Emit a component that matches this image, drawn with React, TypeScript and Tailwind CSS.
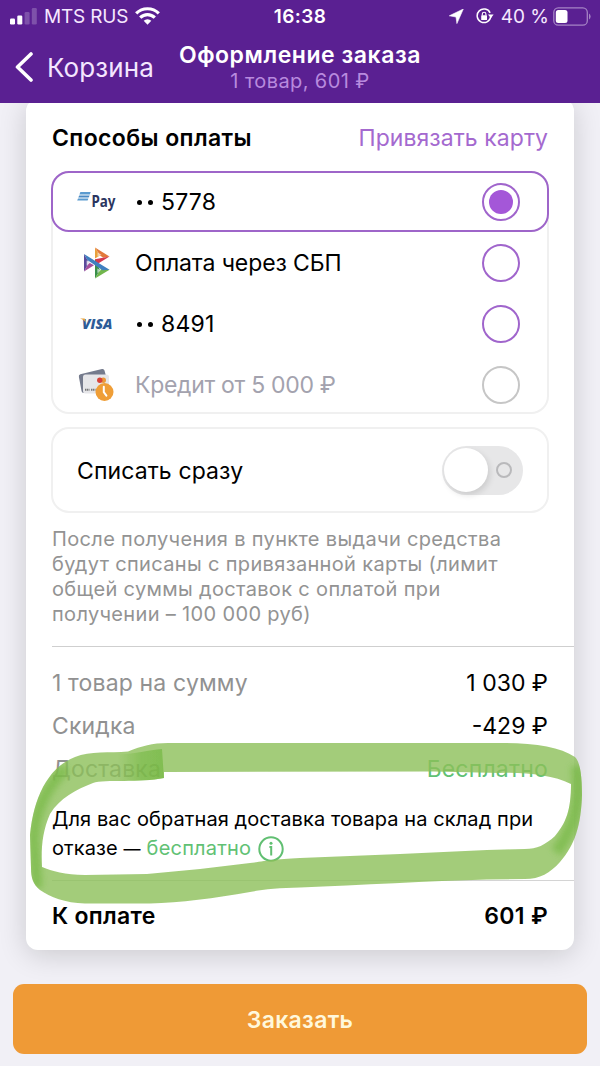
import type {JSX, ReactNode} from 'react';
import clsx from "clsx";

type PaymentOption = {
    id: string
    label: ReactNode
    icon: JSX.Element
    disabled?: boolean
}

type RadioProps = {
    checked: boolean
    disabled?: boolean
}

function MirPayIcon(): JSX.Element {
    return (
        <svg className="overflow-visible" width="40" height="24" viewBox="0 0 40 24">
            <g fill="#5b9bd0">
                <path d="M4.400 2h10.400l-1 2.400H3.400z"/>
                <path d="M3.200 5.400h10.400l-1 2.200H2.300z" fill="#4a8ac4"/>
                <path d="M2 8.600h10.400l-.8 1.800H1.200z"/>
            </g>
            <text x="15.500" y="17.300" fontFamily="Noto Sans, sans-serif" fontWeight="700" fontSize="15.500"
                  textLength="24" lengthAdjust="spacingAndGlyphs" fill="#2b3560">Pay</text>
        </svg>
    );
}

function SbpIcon(): JSX.Element {
    return (
        <svg width="27" height="32" viewBox="0 0 27 32">
            <path d="M1 7v17.5l5-8.7z" fill="#5b4a9b"/>
            <path d="M1 24.5l10-6.3-5-2.7z" fill="#a54f9c"/>
            <path d="M12 .5v11l5-3z" fill="#e9a13b"/>
            <path d="M12 .5l14.5 9-6.3 1.3-3.2-2.4z" fill="#e2793b"/>
            <path d="M26.5 9.5L12 18.5v-6.2z" fill="#d43a50"/>
            <path d="M12 31.5V12.5l5 10.5z" fill="#3a8f4a"/>
            <path d="M12 31.5l14.5-8.7-6-2.4-3.7 2.8z" fill="#72b64c"/>
            <path d="M1 7l25.5 15.8-7 .4L4.3 13z" fill="#3f7fc0"/>
            <path d="M3.7 13.5v5.300l3.300-3z" fill="#fff" opacity=".8"/>
            <path d="M14.5 5.3v4.5l4-2z" fill="#fff" opacity=".5"/>
            <path d="M14.3 21.500v4.500l3.600-2.800z" fill="#fff" opacity=".6"/>
        </svg>
    );
}

function VisaIcon(): JSX.Element {
    return (
        <svg className="overflow-visible" width="34" height="20" viewBox="0 0 34 20">
            <text x="3" y="15" fontFamily="Open Sans, sans-serif" fontWeight="800" fontStyle="italic" fontSize="14.5"
                  textLength="30.5" lengthAdjust="spacingAndGlyphs" fill="#2d5c98">VISA</text>
            <path d="M1 4.400h3.800c.9 0 1.300.5 1.500 1.300l.5 2.900C5.600 6.400 3.800 5.100 1 4.400z" fill="#e8a33d"/>
        </svg>
    );
}

function CreditIcon(): JSX.Element {
    return (
        <svg width="37" height="34" viewBox="0 0 37 34">
            <path d="M2.300 6.200L24 1.100q2-.4 2.500 1.500L28 8v13L5.500 25q-1.500 0-1.900-1.700L.9 9q-.5-2.300 1.400-2.800z"
                  fill="#757b8d"/>
            <rect x="5" y="6.500" width="26" height="19" rx="2.500" fill="#e6e6e9"/>
            <circle cx="25.300" cy="12.300" r="2.700" fill="#eb9a3a"/>
            <circle cx="21.800" cy="12.300" r="2.700" fill="#d6423a"/>
            <path d="M7 21.800h4.500M13 21.800h4.500" stroke="#777" strokeWidth="2" strokeDasharray="1.300 .5"/>
            <circle cx="26.500" cy="24" r="9" fill="#ef9e37"/>
            <path d="M25.800 18.800v5.400l2.600 3.400" fill="none" stroke="#fff" strokeWidth="2" strokeLinecap="round"/>
        </svg>
    );
}

function Dots({digits}: {digits: string}): JSX.Element {
    return (
        <span className="flex items-center">
            <span className="ml-[2px] mr-[6px] size-[5px] rounded-full bg-black"/>
            <span className="mr-[8px] size-[5px] rounded-full bg-black"/>
            <span className="tracking-[0.2px]">{digits}</span>
        </span>
    );
}

function Radio({checked, disabled}: RadioProps): JSX.Element {
    return (
        <span
            className={clsx(
                "flex size-[38px] items-center justify-center rounded-full border-2",
                disabled ? "border-[#c6c6c6]" : "border-[#a065cc]"
            )}>
            {checked && <span className="size-[24px] rounded-full bg-[#a457d8]"/>}
        </span>
    );
}

const options: PaymentOption[] = [
    {id: "mir", label: <Dots digits="5778"/>, icon: <MirPayIcon/>},
    {id: "sbp", label: <span className="tracking-[-0.1px]">Оплата через СБП</span>, icon: <SbpIcon/>},
    {id: "visa", label: <Dots digits="8491"/>, icon: <VisaIcon/>},
    {id: "credit", label: <span className="tracking-[-0.3px]">Кредит от 5 000 ₽</span>, icon: <CreditIcon/>, disabled: true},
];

function StatusBar(): JSX.Element {
    return (
        <div className="relative flex h-[33px] items-center justify-between pl-[10px] pr-[9px] text-[19px] text-[#f6e8ff]">
            <div className="flex items-center">
                <svg width="27" height="17" viewBox="0 0 27 17" fill="#fff">
                    <rect y="10.500" width="5" height="6" rx="1.200"/>
                    <rect x="7.300" y="7.500" width="5" height="9" rx="1.200"/>
                    <rect x="14.600" y="4" width="5" height="12.500" rx="1.200" opacity=".22"/>
                    <rect x="21.800" y="0" width="5" height="16.500" rx="1.200" opacity=".22"/>
                </svg>
                <span className="mt-px ml-[7px] tracking-[-0.2px]">MTS RUS</span>
                <svg className="-mt-px ml-[7px]" width="25" height="18" viewBox="0 0 25 18">
                    <g fill="none" stroke="#fff" strokeWidth="3.200">
                        <path d="M1.200 6.400a16 16 0 0 1 22.600 0"/>
                        <path d="M5.200 10.700a10.300 10.300 0 0 1 14.600 0"/>
                    </g>
                    <path d="M8.700 13.700a5.400 5.400 0 0 1 7.600 0l-3.800 4z" fill="#fff"/>
                </svg>
            </div>
            <span className="absolute inset-x-0 top-[3px] text-center font-semibold tracking-[0.4px] text-white">16:38</span>
            <div className="flex items-center">
                <svg width="15" height="15" viewBox="0 0 15 15" fill="#fff">
                    <path d="M14.300 0L7.900 14.600 7 8 .3 6.800z" stroke="#fff" strokeWidth=".6" strokeLinejoin="round"/>
                </svg>
                <svg className="ml-[12px]" width="18" height="17" viewBox="0 0 18 17">
                    <path d="M14.700 8.800a6.800 6.800 0 1 1-.6-4" fill="none" stroke="#fff" strokeWidth="1.500"/>
                    <path d="M12 6.600h5.600l-2.700 3.600z" fill="#fff"/>
                    <rect x="5.200" y="7.300" width="5.800" height="4.700" rx=".6" fill="#fff"/>
                    <path d="M6.300 7.500V6a1.800 1.800 0 0 1 3.600 0v1.500" fill="none" stroke="#fff" strokeWidth="1.100"/>
                </svg>
                <span className="mt-px ml-[7px]">40 %</span>
                <svg className="-mt-px ml-[4px]" width="38" height="19" viewBox="0 0 38 19">
                    <rect x=".8" y=".8" width="33.500" height="17.400" rx="4.500" fill="none" stroke="#a583c5"
                          strokeWidth="1.300"/>
                    <rect x="2.800" y="3" width="11.700" height="13" rx="2.500" fill="#fff"/>
                    <path d="M36 6.500q1.600.8 1.600 3t-1.600 3z" fill="#a583c5"/>
                </svg>
            </div>
        </div>
    );
}

function Header(): JSX.Element {
    return (
        <header className="relative z-10 h-[103px] bg-[#5a2092]">
            <StatusBar/>
            <div className="relative h-[70px]">
                <div className="flex h-[68px] items-center pl-[15px] text-[#f4e6ff]">
                    <svg width="18" height="30" viewBox="0 0 18 30" fill="none" stroke="#fff" strokeWidth="3.600"
                         strokeLinecap="round" strokeLinejoin="round">
                        <path d="M16 2L2.500 15 16 28"/>
                    </svg>
                    <span className="ml-[14px] text-[26px] tracking-[0.1px]">Корзина</span>
                </div>
                <div className="absolute inset-x-0 top-[9px] text-center">
                    <h1 className="text-[23px] leading-[27px] font-semibold tracking-[0.55px] text-white">Оформление заказа</h1>
                    <p className="text-[20px] leading-[25px] tracking-[0.4px] text-[#b88ade]">1 товар, 601 ₽</p>
                </div>
            </div>
        </header>
    );
}

type RowProps = {
    label: string
    value: string
    free?: boolean
}

function SummaryRow({label, value, free}: RowProps): JSX.Element {
    return (
        <div className="flex h-[43px] items-center justify-between text-[23px]">
            <span className="tracking-[0.15px] text-[#919191]">{label}</span>
            <span className={free ? "tracking-[0.2px] text-[#61c174]" : "text-black"}>{value}</span>
        </div>
    );
}

// hand-drawn marker loop around the return delivery note
function MarkerLoop(): JSX.Element {
    return (
        <svg className="pointer-events-none absolute top-[735px] left-0 z-20" width="600" height="175"
             viewBox="0 735 600 175">
            <defs>
                <filter id="soft" x="-20%" y="-20%" width="140%" height="140%">
                    <feGaussianBlur stdDeviation="0.7"/>
                </filter>
                <filter id="softer" x="-50%" y="-50%" width="200%" height="200%">
                    <feGaussianBlur stdDeviation="3"/>
                </filter>
                <linearGradient id="overlap">
                    <stop offset="0" stopColor="#6fb63c" stopOpacity="0"/>
                    <stop offset=".5" stopColor="#6fb63c" stopOpacity=".5"/>
                    <stop offset="1" stopColor="#6fb63c" stopOpacity=".65"/>
                </linearGradient>
                <clipPath id="loop">
                    <path clipRule="evenodd" d="M168 743L500 743C535 743 560 747 575 757C580 762 582 775 582 795C581 825 575 845 560 862C550 873 540 879 525 879L487 879.500C430 881 360 885 300 887.500C280 888 265 889 250 892C215 898 180 903 150 903.500L85 903.500C65 903 50 897 40 890C33 884 31 878 31 868L30 835C32 815 36 801 43 787C52 771 62 762 75 757C90 751 110 753 128 751.500C142 746 152 743 168 743ZM164 772L433 771.500L500 773C525 772 553 775 571 784C571 810 566 823 555 836C545 845 537 849 525 849L487 850L400 854L300 858C275 859 265 861 250 863L200 869L147 874L85 875C65 875 52 871 42 867C41 850 42 832 50 814C60 798 75 790 93 783C105 779 140 783 164 778Z"/>
                </clipPath>
            </defs>
            <g filter="url(#soft)">
                <g clipPath="url(#loop)">
                    <rect y="735" width="600" height="175" fill="#8cbf59" opacity=".8"/>
                    <path d="M118 754C130 755 148 750 162 749L164 779C148 783 130 781 118 783z" fill="url(#overlap)"/>
                    <path d="M66 768C44 790 34 815 34 840L37 888" stroke="#6fb63c" strokeWidth="11" fill="none"
                          opacity=".6" filter="url(#softer)"/>
                    <path d="M577 766C581 800 575 828 556 852" stroke="#6fb63c" strokeWidth="12" fill="none" opacity=".6"
                          filter="url(#softer)"/>
                </g>
            </g>
        </svg>
    );
}

function App(): JSX.Element {
    return (
        <div
            className="relative h-[1066px] w-[600px] overflow-hidden bg-[#f1f0f6] font-['Inter',sans-serif] whitespace-nowrap">
            <Header/>
            <main
                className="mx-[26px] -mt-[4px] h-[851px] rounded-[12px] bg-white pl-[26px] shadow-[0_5px_28px_rgba(0,0,0,0.16)]">
                <div className="pr-[26px]">
                    <div className="flex h-[72px] items-center justify-between pt-[6px] text-[23px]">
                        <h2 className="font-semibold tracking-[0.4px] text-black">Способы оплаты</h2>
                        <a className="tracking-[0.05px] text-[#a469cf]">Привязать карту</a>
                    </div>
                    <div className="-mx-px h-[243px] rounded-[18px] border-2 border-[#f0f0f0]">
                        {options.map((option, index) => (
                            <div
                                key={option.id}
                                className={clsx(
                                    "flex h-[61px] items-center justify-between pr-[27px]",
                                    index === 0 && "-mx-[2px] -mt-[2px] rounded-[18px] border-2 border-[#9e65c9]"
                                )}>
                                <div className="flex items-center">
                                    <span className="ml-[23px] flex w-[40px] justify-center">{option.icon}</span>
                                    <span
                                        className={clsx("mt-[2px] ml-[19px] text-[23px]", option.disabled ? "text-[#a3a2ae]" : "text-black")}>
                                        {option.label}
                                    </span>
                                </div>
                                <Radio checked={index === 0} disabled={option.disabled}/>
                            </div>
                        ))}
                    </div>
                    <div
                        className="-mx-px mt-[13px] flex h-[86px] items-center justify-between rounded-[18px] border-2 border-[#f0f0f0] pr-[24px] pl-[24px]">
                        <span className="mt-[2px] text-[23px] tracking-[0.1px] text-black">Списать сразу</span>
                        <span className="flex h-[49px] w-[81px] items-center rounded-full bg-[#e7e7e8] pl-[2px]">
                            <span className="size-[44px] rounded-full bg-white shadow-[2px_3px_6px_rgba(0,0,0,0.12)]"/>
                            <span className="ml-[8px] size-[16px] rounded-full border-2 border-[#b9b9bb]"/>
                        </span>
                    </div>
                    <p className="mt-[14px] text-[20px] leading-[25px] tracking-[0.34px] text-[#939393]">
                        После получения в пункте выдачи средства<br/>
                        будут списаны с привязанной карты (лимит<br/>
                        общей суммы доставок с оплатой при<br/>
                        получении – 100 000 руб)
                    </p>
                </div>
                <div className="mt-[19px] border-t border-[#cfcfcf] pt-[15px] pr-[26px]">
                    <SummaryRow label="1 товар на сумму" value="1 030 ₽"/>
                    <SummaryRow label="Скидка" value="-429 ₽"/>
                    <SummaryRow label="Доставка" value="Бесплатно" free/>
                </div>
                <div className="mt-[14px] pr-[26px] text-[20px] leading-[29px] tracking-[0.09px] text-black">
                    <p>Для вас обратная доставка товара на склад при</p>
                    <p className="flex h-[29px] items-center">
                        <span>отказе <span className="text-[17px]">—</span></span>
                        <span className="ml-[6px] tracking-[0.2px] text-[#61c174]">бесплатно</span>
                        <svg className="ml-[7px]" width="26" height="26" viewBox="0 0 26 26" fill="none" stroke="#61bf72"
                             strokeWidth="2">
                            <circle cx="13" cy="13" r="11.700"/>
                            <path d="M11.400 11h1.800v8.500" strokeWidth="2"/>
                            <circle cx="13" cy="7.300" r="1.500" fill="#61bf72" stroke="none"/>
                        </svg>
                    </p>
                </div>
                <div className="mt-[17px] border-t border-[#d4d4d4] pr-[26px]">
                    <div
                        className="flex h-[70px] items-center justify-between text-[23px] font-semibold tracking-[0.3px] text-black">
                        <span>К оплате</span>
                        <span>601 ₽</span>
                    </div>
                </div>
            </main>
            <button
                className="relative mx-[13px] mt-[34px] block h-[70px] w-[574px] rounded-[11px] bg-[#ef9a36] pt-[2px] text-[23px] font-semibold tracking-[0.3px] text-[#fff8dc]">
                Заказать
            </button>
            <MarkerLoop/>
        </div>
    );
}

export default App;
